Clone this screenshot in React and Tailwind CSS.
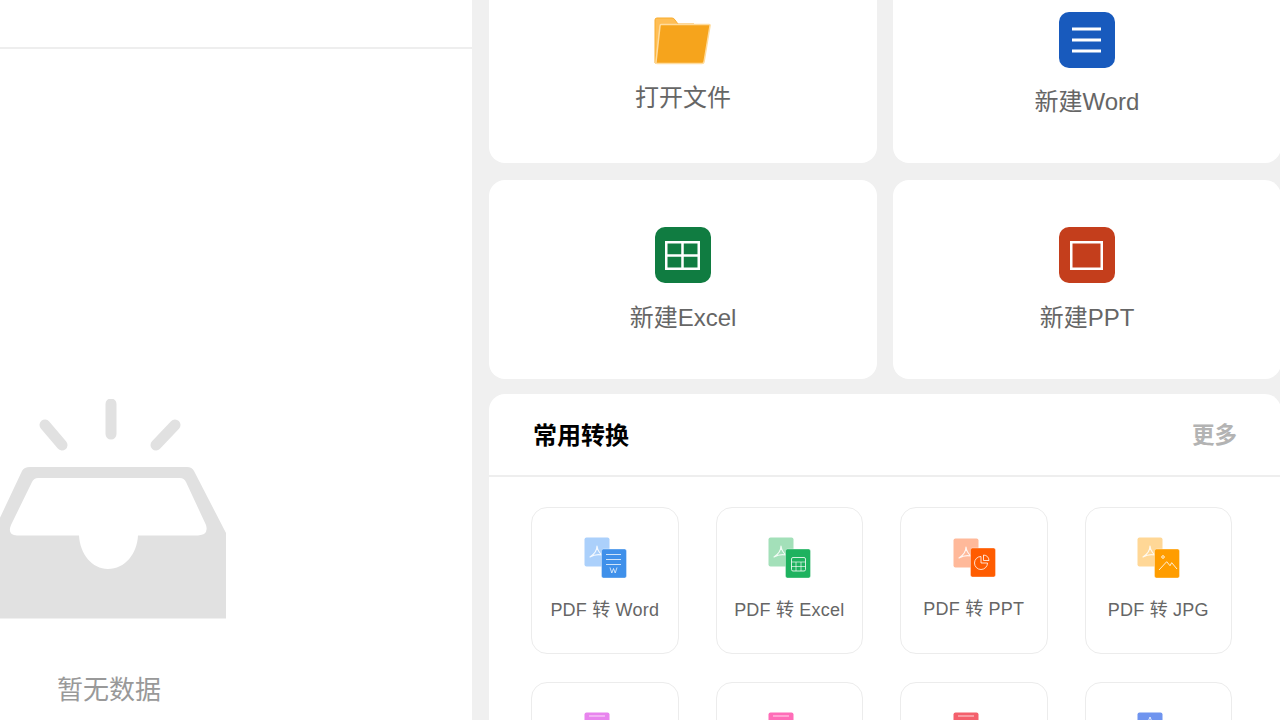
import React from 'react';

// Adobe style mark on the back sheet of each convert icon
const PdfMark = () => (
  <path d="M13 9 C13 13 10.500 17 6 20 C9.500 18 14 17 18 18 C15.500 16 13.500 13 13 9 Z" fill="none" stroke="#fff" strokeOpacity="0.85" strokeWidth="1.200" strokeLinejoin="round" />
);

const ConvertIcon = ({ back, front, top = 'mt-[29px]', frontY = 12, children }) => (
  <svg width="42" height="42" viewBox="0 0 42 42" className={`${top} block overflow-visible`}>
    <rect x="0.500" y="0.500" width="25" height="29" rx="2" fill={back} />
    <PdfMark />
    <rect x="17.500" y={frontY} width="25" height="29" rx="2" fill={front} stroke="#fff" strokeOpacity="0.35" />
    {children}
  </svg>
);

const Tile = ({ label, children, textClass = 'mt-[19px]' }) => (
  <div className="h-[147px] rounded-[16px] border border-[#ececec] bg-white flex flex-col items-center">
    {children}
    <div className={`${textClass} text-[18px] leading-[24px] tracking-[0.2px] text-[#666] whitespace-nowrap`}>{label}</div>
  </div>
);

const PeekIcon = ({ color, mark }) => (
  <div className="h-[147px] rounded-[16px] border border-[#ececec] bg-white flex flex-col items-center">
    <svg width="42" height="12" viewBox="0 0 42 12" className="mt-[29px] block">
      <rect x="0.500" y="0.500" width="25" height="29" rx="2" fill={color} />
      {mark ? (
        <path d="M13 5 L10.500 11 M13 5 L15.500 11" stroke="#fff" strokeOpacity="0.8" strokeWidth="1" />
      ) : (
        <rect x="5" y="3.500" width="16" height="1" fill="#fff" fillOpacity="0.75" />
      )}
    </svg>
  </div>
);

const BigCard = ({ label, children, className }) => (
  <div className={`flex flex-col items-center bg-white ${className}`}>
    {children}
    <div className="text-[24px] leading-[32px] text-[#666] whitespace-nowrap">{label}</div>
  </div>
);

export default function App() {
  return (
    <div className="w-[1280px] h-[720px] overflow-hidden flex bg-[#f0f0f0] font-['Liberation_Sans','Noto_Sans_CJK_SC',sans-serif]">
      {/* left panel */}
      <div className="w-[472px] h-full shrink-0 bg-white flex flex-col overflow-hidden">
        <div className="h-[49px] shrink-0 border-b-2 border-[#eee]" />
        <svg width="226" height="220" viewBox="0 0 226 220" className="mt-[350px] block shrink-0">
          <path d="M111 5 V35 M45 26 L62 46 M175 26 L156 46" stroke="#e1e1e1" strokeWidth="11" strokeLinecap="round" fill="none" />
          <path fillRule="evenodd" fill="#e1e1e1" d="M30 68 H187 Q192 68 194 72 L226 134 V219.500 H-10 V140 L22 72 Q24 68 30 68 Z M38 79 Q34 79 32 83 L11 126 Q7 136 17 136.500 H79 C80 155 92 170 108 170 C125 170 137 155 138 136.500 H198 Q209 136 206 126 L186 83 Q184 79 180 79 Z" />
        </svg>
        <div className="w-[218px] mt-[54px] text-center text-[26px] leading-[34px] text-[#999] whitespace-nowrap">暂无数据</div>
      </div>

      {/* right column */}
      <div className="ml-[17px] w-[792px] shrink-0">
        <div className="grid grid-cols-2 gap-x-[16px]">
          <BigCard label="打开文件" className="h-[163px] rounded-b-[16px]">
            <svg width="58" height="48" viewBox="0 0 58 48" className="mt-[17px] mb-[17px] block">
              <path d="M1 46 V3 Q1 1 3 1 H18 Q20 1 21 3 L24 7 H40 V20 L8 46 Z" fill="#ffbe55" stroke="#f8ab2b" strokeWidth="1" />
              <path d="M7 7.500 H55 Q56.500 7.500 56 9 L50 45 Q49.700 46.500 48 46.500 H3 Q1.500 46.500 2 45 L6 9 Q6.200 7.500 7 7.500 Z" fill="#f6a41c" stroke="#ffdc9e" strokeWidth="1.500" />
            </svg>
          </BigCard>
          <BigCard label="新建Word" className="h-[163px] rounded-b-[16px]">
            <svg width="56" height="56" viewBox="0 0 56 56" className="mt-[12px] mb-[18px] block">
              <rect width="56" height="56" rx="10" fill="#185abd" />
              <path d="M13 17 H42 M13 28 H42 M13 39 H42" stroke="#fff" strokeWidth="3" />
            </svg>
          </BigCard>
        </div>
        <div className="grid grid-cols-2 gap-x-[16px] mt-[17px]">
          <BigCard label="新建Excel" className="h-[199px] rounded-[16px]">
            <svg width="56" height="56" viewBox="0 0 56 56" className="mt-[47px] mb-[19px] block">
              <rect width="56" height="56" rx="10" fill="#107c41" />
              <path d="M11.250 15.250 H43.750 V41.750 H11.250 Z M27.500 15.250 V41.750 M11.250 28.500 H43.750" fill="none" stroke="#fff" strokeWidth="2.500" />
            </svg>
          </BigCard>
          <BigCard label="新建PPT" className="h-[199px] rounded-[16px]">
            <svg width="56" height="56" viewBox="0 0 56 56" className="mt-[47px] mb-[19px] block">
              <rect width="56" height="56" rx="10" fill="#c43e1c" />
              <rect x="12.250" y="15.250" width="30.500" height="26.500" fill="none" stroke="#fff" strokeWidth="2.500" />
            </svg>
          </BigCard>
        </div>

        {/* 常用转换 */}
        <div className="mt-[15px] bg-white rounded-t-[16px] h-[400px]">
          <div className="h-[83px] pt-[3px] border-b-2 border-[#eee] flex items-center justify-between pl-[44px] pr-[44px]">
            <span className="text-[24px] font-bold text-black">常用转换</span>
            <span className="text-[22.500px] font-bold text-[#b3b3b3]">更多</span>
          </div>
          <div className="ml-[42px] mt-[30px] w-[701px] grid grid-cols-4 gap-x-[37px] gap-y-[28px]">
            <Tile label="PDF 转 Word">
              <ConvertIcon back="#abd0fb" front="#3f90ea">
                <path d="M22 17.500 H37 M22 22.500 H37 M22 27.500 H37" stroke="#fff" strokeOpacity="0.75" strokeWidth="1.200" />
                <path d="M26 30.500 L27.800 36 L29.500 31.500 L31.200 36 L33 30.500" fill="none" stroke="#fff" strokeOpacity="0.8" strokeWidth="0.900" />
              </ConvertIcon>
            </Tile>
            <Tile label="PDF 转 Excel">
              <ConvertIcon back="#a3e0b9" front="#1eb25f">
                <rect x="23.500" y="20.500" width="14" height="13.500" rx="1.500" fill="none" stroke="#fff" strokeOpacity="0.8" />
                <path d="M23.500 25 H37.500 M23.500 29.500 H37.500 M28 25 V34 M33 25 V34" stroke="#fff" strokeOpacity="0.8" strokeWidth="0.800" />
              </ConvertIcon>
            </Tile>
            <Tile label="PDF 转 PPT" textClass="mt-[17px]">
              <ConvertIcon back="#ffb99a" front="#ff5c00" top="mt-[30px]" frontY={10}>
                <path d="M28 18.500 A6.500 6.500 0 1 0 34.500 25 H28 Z" fill="none" stroke="#fff" strokeOpacity="0.8" />
                <path d="M30.500 17 A6 6 0 0 1 36 22.500 H30.500 Z" fill="none" stroke="#fff" strokeOpacity="0.8" />
              </ConvertIcon>
            </Tile>
            <Tile label="PDF 转 JPG">
              <ConvertIcon back="#ffd796" front="#ff9d00">
                <circle cx="26" cy="20" r="1.300" fill="none" stroke="#fff" strokeOpacity="0.85" />
                <path d="M22 33 L29.700 24.700 L33 28.700 L34.700 25.700 L40 32" fill="none" stroke="#fff" strokeOpacity="0.85" />
              </ConvertIcon>
            </Tile>
            <PeekIcon color="#e884ee" />
            <PeekIcon color="#ff6db8" />
            <PeekIcon color="#f4606c" />
            <PeekIcon color="#6f94ef" mark />
          </div>
        </div>
      </div>
    </div>
  );
}
